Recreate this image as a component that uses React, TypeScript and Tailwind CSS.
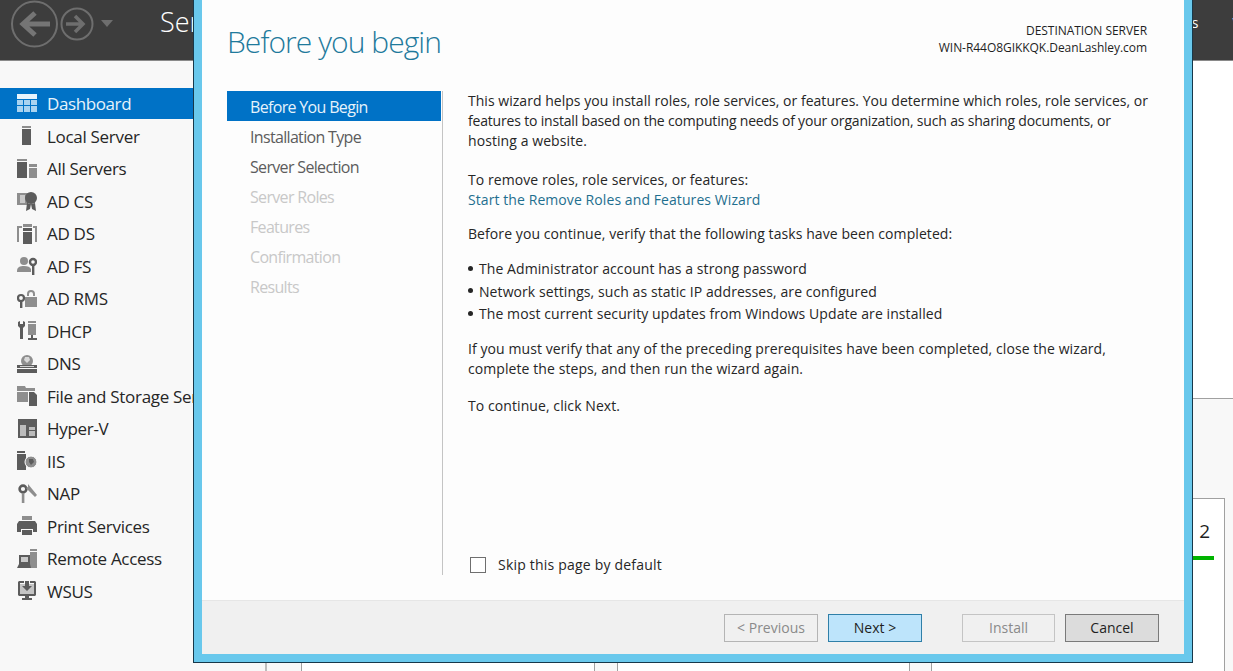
import type { ReactNode } from "react";

const DARK = "#5c5c5c";
const MID = "#8e8e8e";

// Small role icons for the sidebar, drawn on a 20x20 grid
const icons: Record<string, ReactNode> = {
  dashboard: (
    <>
      <rect x="0" y="0" width="20" height="5" fill="#e8f4fc" />
      <path d="M0 6h6v5H0zM7 6h6v5H7zM14 6h6v5h-6zM0 12h6v6H0zM7 12h6v6H7zM14 12h6v6h-6z" fill="#a9d3f0" />
    </>
  ),
  local: (
    <>
      <rect x="5" y="0" width="9" height="2" fill={MID} />
      <rect x="5" y="3" width="9" height="16" fill={DARK} />
    </>
  ),
  all: (
    <>
      <rect x="0" y="0" width="10" height="2" fill={MID} />
      <rect x="0" y="3" width="10" height="16" fill={DARK} />
      <rect x="12" y="5" width="8" height="3" fill={MID} />
      <rect x="12" y="9" width="8" height="10" fill={MID} />
    </>
  ),
  adcs: (
    <>
      <rect x="0" y="2" width="11" height="12" fill={MID} />
      <rect x="3" y="4" width="5" height="8" fill="#c9c9c9" />
      <circle cx="14" cy="7" r="6" fill={DARK} />
      <path d="M10 12l-1 8 4-2 1-5zM18 12l1 8-4-2-1-5z" fill={DARK} />
    </>
  ),
  adds: (
    <>
      <path d="M0 2h5v2H2v14H0zM20 2h-4v2h2v14h2z" fill={MID} />
      <rect x="6" y="0" width="9" height="3" fill={MID} />
      <rect x="6" y="4" width="9" height="3" fill={DARK} />
      <rect x="6" y="8" width="9" height="12" fill={DARK} />
    </>
  ),
  adfs: (
    <>
      <circle cx="7" cy="5" r="4" fill={MID} />
      <path d="M0 15c0-4 3-5 7-5s6 1 7 3v3H0z" fill={MID} />
      <circle cx="16" cy="6" r="3" fill="none" stroke={DARK} strokeWidth="2.4" />
      <rect x="15" y="9" width="2.4" height="10" fill={DARK} />
    </>
  ),
  adrms: (
    <>
      <circle cx="4" cy="9" r="3" fill="none" stroke={DARK} strokeWidth="2.2" />
      <rect x="3" y="12" width="2.4" height="7" fill={DARK} />
      <path d="M10 7V5a4 4 0 0 1 8 0v2h-2V5a2 2 0 0 0-4 0v2z" fill={MID} />
      <rect x="8" y="8" width="12" height="10" fill={MID} />
    </>
  ),
  dhcp: (
    <>
      <path d="M1 1v4l2 2v11h3V7l2-2V1L6 0v3H3V0z" fill={DARK} />
      <rect x="11" y="0" width="8" height="2" fill={MID} />
      <rect x="11" y="3" width="8" height="11" fill={MID} />
      <path d="M14 14h2v3h4v2h-9v-2h3z" fill={DARK} />
    </>
  ),
  dns: (
    <>
      <circle cx="10" cy="7" r="6" fill={MID} />
      <path d="M8 3h4l1 3-3 3-3-3z" fill="#d8d8d8" />
      <rect x="0" y="11" width="20" height="3" fill={DARK} />
      <rect x="0" y="15" width="20" height="4" fill={DARK} />
      <rect x="3" y="12" width="14" height="1" fill="#d0d0d0" />
    </>
  ),
  file: (
    <>
      <path d="M0 0h8l1 2h9v3H0z" fill={MID} />
      <rect x="0" y="6" width="11" height="10" fill={MID} />
      <path d="M12 6h5l3 3v11h-8z" fill={DARK} />
    </>
  ),
  hyperv: (
    <>
      <rect x="1" y="0" width="19" height="19" fill={DARK} />
      <rect x="3" y="6" width="6" height="11" fill="#bcbcbc" />
      <rect x="12" y="8" width="6" height="3" fill="#bcbcbc" />
      <rect x="12" y="12" width="6" height="5" fill="#bcbcbc" />
    </>
  ),
  iis: (
    <>
      <rect x="0" y="0" width="8" height="2" fill={DARK} />
      <rect x="0" y="3" width="9" height="16" fill={DARK} />
      <circle cx="14" cy="11" r="6" fill={MID} stroke="#fff" strokeWidth="1" />
      <path d="M12 8h4l1 3-3 3-2-3z" fill={DARK} />
    </>
  ),
  nap: (
    <>
      <circle cx="6" cy="5" r="3.4" fill="none" stroke={DARK} strokeWidth="2.6" />
      <rect x="4.8" y="9" width="2.6" height="10" fill={MID} />
      <path d="M11 0l9 11-2 2-9-9 2-1z" fill={MID} />
    </>
  ),
  print: (
    <>
      <rect x="5" y="0" width="10" height="4" fill={MID} />
      <path d="M0 8l2-3h16l2 3v8h-4v-3H4v3H0z" fill={DARK} />
      <rect x="5" y="14" width="10" height="5" fill={DARK} />
    </>
  ),
  remote: (
    <>
      <rect x="13" y="0" width="7" height="2" fill={MID} />
      <rect x="13" y="3" width="7" height="16" fill={MID} />
      <rect x="2" y="6" width="11" height="9" fill={DARK} />
      <rect x="4" y="8" width="7" height="5" fill="#c9c9c9" />
      <path d="M2 15h11l1 4H0z" fill={DARK} />
    </>
  ),
  wsus: (
    <>
      <path d="M2 0h5v2H3v11h14V2h-4V0h5l1 1v13l-1 1H2l-1-1V1z" fill={DARK} />
      <rect x="3" y="3" width="14" height="10" fill="#c4c4c4" />
      <path d="M8 0h4v5h3l-5 5-5-5h3z" fill={DARK} />
      <path d="M8 15h4v2h3v2H5v-2h3z" fill={DARK} />
    </>
  ),
};

const navItems = [
  { icon: "local", label: "Local Server" },
  { icon: "all", label: "All Servers" },
  { icon: "adcs", label: "AD CS" },
  { icon: "adds", label: "AD DS" },
  { icon: "adfs", label: "AD FS" },
  { icon: "adrms", label: "AD RMS" },
  { icon: "dhcp", label: "DHCP" },
  { icon: "dns", label: "DNS" },
  { icon: "file", label: "File and Storage Services" },
  { icon: "hyperv", label: "Hyper-V" },
  { icon: "iis", label: "IIS" },
  { icon: "nap", label: "NAP" },
  { icon: "print", label: "Print Services" },
  { icon: "remote", label: "Remote Access" },
  { icon: "wsus", label: "WSUS" },
];

const steps = [
  { label: "Installation Type", on: true },
  { label: "Server Selection", on: true },
  { label: "Server Roles", on: false },
  { label: "Features", on: false },
  { label: "Confirmation", on: false },
  { label: "Results", on: false },
];

const tasks = [
  "The Administrator account has a strong password",
  "Network settings, such as static IP addresses, are configured",
  "The most current security updates from Windows Update are installed",
];

function NavIcon({ name }: { name: string }) {
  return (
    <svg viewBox="0 0 20 20" className="w-5 h-5 flex-shrink-0">
      {icons[name]}
    </svg>
  );
}

function WizardButton({ children, className }: { children: ReactNode; className: string }) {
  return (
    <div className={`h-[28px] border flex items-center justify-center text-[14px] ${className}`}>
      {children}
    </div>
  );
}

export default function App() {
  return (
    <div className="relative w-[1233px] h-[671px] overflow-hidden bg-white font-['Open_Sans',sans-serif] text-[#262626]">
      {/* Header */}
      <div className="h-[61px] bg-[#3d3d3d] border-b border-[#8a8a8a] flex items-center overflow-hidden">
        <svg viewBox="0 0 120 48" className="w-[120px] h-[48px] ml-[10px] mb-[13px] flex-shrink-0">
          <circle cx="24.5" cy="24" r="22.5" fill="none" stroke="#6e6e6e" strokeWidth="2" />
          <path d="M40 24H14M25 13L13 24l12 11" fill="none" stroke="#757575" strokeWidth="5" />
          <circle cx="67" cy="24" r="15.5" fill="none" stroke="#6e6e6e" strokeWidth="2" />
          <path d="M56 24h17M65 16l8 8-8 8" fill="none" stroke="#6e6e6e" strokeWidth="3.5" />
          <path d="M91 20h12l-6 7z" fill="#6e6e6e" />
        </svg>
        <span className="ml-[30px] mb-[16px] text-[27px] font-light text-white">Server Manager</span>
        <div className="ml-auto flex mb-[16px] text-[14px] text-white gap-[34px] mr-[-30px]">
          <span>Tools</span>
          <span>View</span>
        </div>
      </div>

      <div className="flex h-[610px]">
        {/* Sidebar */}
        <div className="w-[193px] flex-shrink-0 bg-[#f8f8f8] pt-[27px] overflow-hidden">
          <div className="h-[31px] mb-[1px] bg-[#0072c6] flex items-center pl-[17px] gap-[10px] text-[#e6f3fb] text-[17px] tracking-[-0.4px]">
            <NavIcon name="dashboard" />
            <span>Dashboard</span>
          </div>
          {navItems.map(item => (
            <div key={item.label} className="h-[32.5px] flex items-center pl-[17px] gap-[10px] text-[17px] tracking-[-0.3px] whitespace-nowrap">
              <NavIcon name={item.icon} />
              <span>{item.label}</span>
            </div>
          ))}
        </div>

        {/* Main area behind the wizard */}
        <div className="flex-1 flex flex-col">
          <div className="h-[338px] flex-shrink-0 bg-white border-b border-[#a0a0a0]" />
          <div className="flex-1 bg-[#f8f8f8] pt-[99px] flex">
            <div className="w-[74px] flex-shrink-0 border-r-2 border-[#bdbdbd]" />
            <div className="w-[34px] flex-shrink-0" />
            <div className="w-[294px] flex-shrink-0 bg-white border-x border-[#a0a0a0]" />
            <div className="w-[22px] flex-shrink-0" />
            <div className="w-[293px] flex-shrink-0 bg-white border-x border-[#a0a0a0]" />
            <div className="w-[21px] flex-shrink-0" />
            <div className="w-[294px] flex-shrink-0 bg-white border-x border-t border-[#a0a0a0] relative">
              <span className="absolute right-[14px] top-[18px] text-[19px] text-[#1f1f1f]">2</span>
              <div className="absolute right-[10px] top-[57px] w-[40px] h-1 bg-[#00b300]" />
            </div>
          </div>
        </div>
      </div>

      {/* Wizard window */}
      <div className="absolute left-[193px] top-0 w-[1000px] h-[663px] bg-[#69c8ec] border-x border-b border-[#17384a] px-2 pb-2">
        <div className="h-full bg-[#fdfdfd] flex flex-col">
          <div className="h-[91px] flex-shrink-0 flex justify-between pl-[25px] pr-[37px]">
            <div className="mt-[21px] text-[30px] leading-[42px] font-light text-[#1f7a9c] tracking-[-0.95px]">Before you begin</div>
            <div className="mt-[22px] text-right text-[12px] leading-[17px] text-[#1f1f1f] tracking-[-0.05px]">
              <div>DESTINATION SERVER</div>
              <div>WIN-R44O8GIKKQK.DeanLashley.com</div>
            </div>
          </div>

          <div className="flex-1 flex pl-[25px]">
            <div className="w-[216px] h-[484px] flex-shrink-0 border-r border-[#c4c4c4] text-[16px] tracking-[-0.67px]">
              <div className="h-[30px] w-[214px] bg-[#0072c6] text-[#e6f3fb] pl-[23px] pt-[2px] flex items-center">Before You Begin</div>
              {steps.map(step => (
                <div key={step.label} className={`h-[30px] pl-[23px] pt-[2px] flex items-center ${step.on ? "text-[#5c5c5c]" : "text-[#c8c8c8]"}`}>
                  {step.label}
                </div>
              ))}
            </div>

            <div className="ml-[25px] flex flex-col text-[14px] leading-[20px] tracking-[0.08px] whitespace-nowrap">
              <div>
                <span className="tracking-[0.03px]">This wizard helps you install roles, role services, or features. You determine which roles, role services, or</span>
                <br />
                <span className="tracking-[-0.18px]">features to install based on the computing needs of your organization, such as sharing documents, or</span>
                <br />
                hosting a website.
              </div>
              <div className="mt-[19px]">To remove roles, role services, or features:</div>
              <div className="text-[#1f6f8f]">Start the Remove Roles and Features Wizard</div>
              <div className="mt-[14px]">Before you continue, verify that the following tasks have been completed:</div>
              <ul className="mt-[15px] flex flex-col gap-[2.5px]">
                {tasks.map(task => (
                  <li key={task} className="flex items-center">
                    <span className="w-[5px] h-[5px] mr-[6px] mb-[2px] rounded-full bg-[#262626]" />
                    {task}
                  </li>
                ))}
              </ul>
              <div className="mt-[15px]">
                If you must verify that any of the preceding prerequisites have been completed, close the wizard,
                <br />
                complete the steps, and then run the wizard again.
              </div>
              <div className="mt-[17px]">To continue, click Next.</div>
              <div className="mt-[139px] flex items-center gap-3 ml-[2px]">
                <div className="w-4 h-4 border border-[#6f6f6f] bg-white" />
                <span className="tracking-[0.2px]">Skip this page by default</span>
              </div>
            </div>
          </div>

          <div className="h-[54px] flex-shrink-0 bg-[#f0f0f0] border-t border-[#e6e6e6] flex items-center justify-end pr-[25px]">
            <WizardButton className="w-[94px] border-[#b4b4b4] text-[#8a8a8a]">&lt; Previous</WizardButton>
            <WizardButton className="w-[94px] ml-[10px] bg-[#bde4fb] border-[#2f7fa8] text-[#1f1f1f]">Next &gt;</WizardButton>
            <WizardButton className="w-[93px] ml-[40px] border-[#c4c4c4] text-[#8a8a8a]">Install</WizardButton>
            <WizardButton className="w-[94px] ml-[10px] bg-[#dcdcdc] border-[#7a7a7a] text-[#1f1f1f]">Cancel</WizardButton>
          </div>
        </div>
      </div>
    </div>
  );
}
